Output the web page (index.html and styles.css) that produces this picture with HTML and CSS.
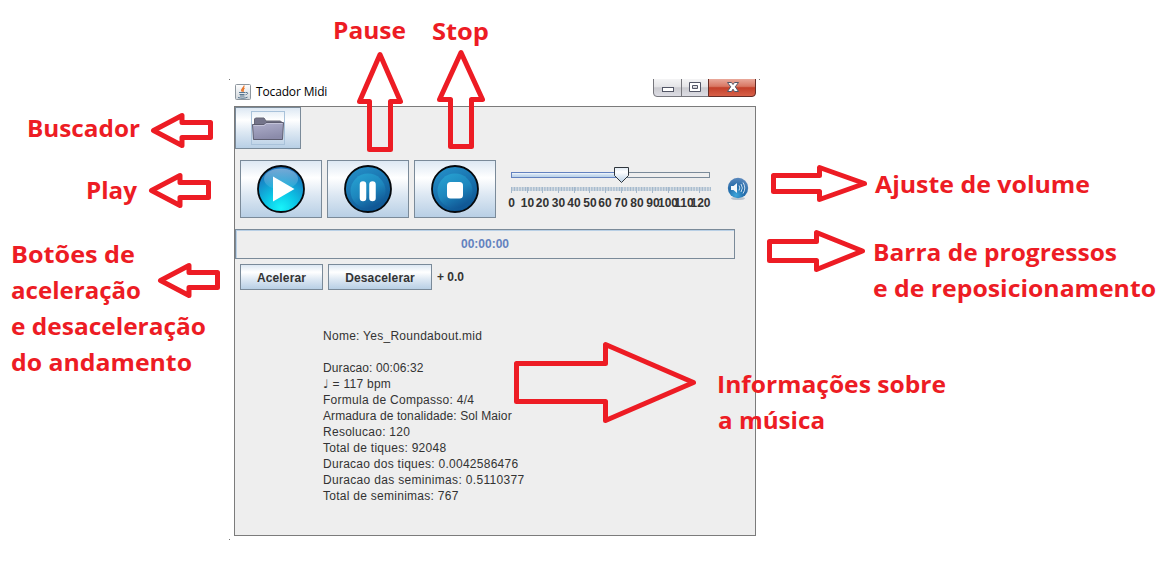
FILE: index.html
```
<!DOCTYPE html>
<html lang="pt-BR">
<head>
<meta charset="utf-8">
<title>Tocador Midi</title>
<link rel="stylesheet" href="styles.css">
</head>
<body>
<main class="page">
  <section class="window">
    <header class="titlebar">
      <svg class="java-icon" width="16" height="16" viewBox="0 0 16 16">
        <defs><linearGradient id="tile" x2="0" y2="1"><stop stop-color="#fff"/><stop offset="1" stop-color="#cfd5da"/></linearGradient></defs>
        <rect x=".5" y=".5" width="15" height="15" rx="1" fill="url(#tile)" stroke="#8d969e"/>
        <path d="M9 1.500C9.500 4 5.500 4.500 7 7.500M9.500 4C7.500 5.500 8.500 6 8 8" fill="none" stroke="#e8772e" stroke-width="1.300"/>
        <path d="M4 8.500h6.500M11 8.500c2.500-.5 2 2-.5 2.300M4.500 10.500h5M5 12h4.500M3 13.500c3 1 7 1 9.500-.3" fill="none" stroke="#56758f" stroke-width="1"/>
      </svg>
      <h1 class="title">Tocador Midi</h1>
      <svg class="controls" width="104" height="19" viewBox="0 0 104 19">
        <defs>
          <linearGradient id="glass" x2="0" y2="1"><stop stop-color="#f4f4f5"/><stop offset=".45" stop-color="#e4e4e7"/><stop offset=".5" stop-color="#cbcbd0"/><stop offset="1" stop-color="#dedee5"/></linearGradient>
          <linearGradient id="close" x2="0" y2="1"><stop stop-color="#e9a99b"/><stop offset=".42" stop-color="#d87763"/><stop offset=".5" stop-color="#c3402a"/><stop offset="1" stop-color="#d9624a"/></linearGradient>
        </defs>
        <path d="M.5 0V14Q.5 17.500 4 17.500H55.500V0Z" fill="url(#glass)"/>
        <path d="M55.500 0H102.500V14Q102.500 17.500 99 17.500H55.500Z" fill="url(#close)"/>
        <path d="M.5 0V14Q.5 17.500 4 17.500H55.500M28.500 0V17" fill="none" stroke="#77777d"/>
        <path d="M55.500 0V17.500H99Q102.500 17.500 102.500 14V0" fill="none" stroke="#642c26"/>
        <rect x="9.500" y="8.500" width="11" height="4" fill="#fff" stroke="#535666"/>
        <path d="M36.500 3.500h11v9h-11zM39.500 6.500h5v3h-5z" fill="#fff" fill-rule="evenodd" stroke="#535666"/>
        <path d="M74.500 3.500h4l1.500 2 1.500-2h4l-3.200 4.300 3.200 4.700h-4L80 10.200l-1.500 2.300h-4l3.200-4.700z" fill="#fff" stroke="#535666"/>
      </svg>
    </header>

    <div class="content">
      <button class="btn browse" aria-label="Buscador">
        <svg width="34" height="34" viewBox="0 0 34 34">
          <defs><linearGradient id="folder" x2=".3" y2="1"><stop stop-color="#b0b0cc"/><stop offset="1" stop-color="#8b8baa"/></linearGradient></defs>
          <rect x=".5" y=".5" width="33" height="33" fill="none" stroke="#a9c2da"/>
          <path d="M3.500 27V8l1-1H13l2 3h14.500l1 1v4" fill="#74748a" stroke="#666675"/>
          <path d="M1.500 13.500H13l2-2h17.500L31.500 28.500H2.500z" fill="url(#folder)" stroke="#5d5d70"/>
          <path d="M2.500 14.500h11l2-2h16" fill="none" stroke="#c3c3d8"/>
        </svg>
      </button>

      <div class="transport">
        <button class="btn media" aria-label="Play">
          <svg width="48" height="48" viewBox="0 0 48 48">
            <defs>
              <radialGradient id="cyan" cx=".5" cy=".92" r=".85"><stop stop-color="#18f4fa"/><stop offset=".4" stop-color="#0bc6e6"/><stop offset=".75" stop-color="#1593cd"/><stop offset="1" stop-color="#1972bb"/></radialGradient>
              <linearGradient id="shine" x2="0" y2="1"><stop stop-color="#fff" stop-opacity=".4"/><stop offset="1" stop-color="#fff" stop-opacity=".05"/></linearGradient>
            </defs>
            <circle cx="24" cy="24" r="23" fill="url(#cyan)" stroke="#05090d" stroke-width="1.800"/>
            <ellipse cx="24" cy="14" rx="17" ry="10.500" fill="url(#shine)"/>
            <path d="M16 11.500L37.500 24 16 36.500Z" fill="#fff"/>
          </svg>
        </button>
        <button class="btn media" aria-label="Pause">
          <svg width="48" height="48" viewBox="0 0 48 48">
            <defs>
              <linearGradient id="ring" x1=".25" x2=".75" y2="1"><stop stop-color="#248fc8"/><stop offset="1" stop-color="#0d5391"/></linearGradient>
              <linearGradient id="disc" x1=".25" x2=".75" y2="1"><stop stop-color="#269fd0"/><stop offset=".5" stop-color="#1d86bd"/><stop offset="1" stop-color="#0f508f"/></linearGradient>
            </defs>
            <circle cx="24" cy="24" r="23" fill="url(#ring)" stroke="#05090d" stroke-width="1.800"/>
            <circle cx="24" cy="26" r="17.500" fill="url(#disc)"/>
            <path d="M19 19.500V33M28.500 19.500V33" stroke="#fff" stroke-width="6.500" stroke-linecap="round" fill="none"/>
          </svg>
        </button>
        <button class="btn media" aria-label="Stop">
          <svg width="48" height="48" viewBox="0 0 48 48">
            <circle cx="24" cy="24" r="23" fill="url(#ring)" stroke="#05090d" stroke-width="1.800"/>
            <circle cx="24" cy="26" r="17.500" fill="url(#disc)"/>
            <rect x="16" y="17" width="16" height="16.500" rx="3.500" fill="#fff"/>
          </svg>
        </button>
        <svg class="slider" width="214" height="48" viewBox="501 163 214 48">
          <defs>
            <linearGradient id="fill" x2="0" y2="1"><stop stop-color="#fff"/><stop offset=".5" stop-color="#c8dcf0"/><stop offset="1" stop-color="#b8cfe5"/></linearGradient>
            <linearGradient id="thumb" x2="0" y2="1"><stop stop-color="#dde8f3"/><stop offset=".3" stop-color="#fff"/><stop offset="1" stop-color="#b8cfe5"/></linearGradient>
            <pattern id="minor" x="511" y="187" width="1.567" height="4" patternUnits="userSpaceOnUse"><rect width="1" height="4" fill="#a3b8cc"/></pattern>
          </defs>
          <rect x="511.500" y="172.500" width="198" height="5" fill="#eee" stroke="#7a8a99"/>
          <rect x="511.500" y="172.500" width="110" height="5" fill="url(#fill)" stroke="#6382bf"/>
          <rect x="511" y="187" width="200" height="4" fill="url(#minor)"/>
          <path d="M511.500 187v6M527.500 187v6M542.500 187v6M558.500 187v6M574.500 187v6M589.500 187v6M605.500 187v6M621.500 187v6M636.500 187v6M652.500 187v6M668.500 187v6M683.500 187v6M699.500 187v6" stroke="#a3b8cc"/>
          <path d="M614.500 167.500h14v8l-7 7-7-7z" fill="url(#thumb)" stroke="#30363c"/>
          <g class="tick-labels">
            <text x="511.500" y="207">0</text><text x="527.500" y="207">10</text><text x="542.500" y="207">20</text><text x="558.500" y="207">30</text><text x="574" y="207">40</text><text x="590" y="207">50</text><text x="605" y="207">60</text><text x="621" y="207">70</text><text x="637" y="207">80</text><text x="653" y="207">90</text><text x="668" y="207">100</text><text x="684" y="207">110</text><text x="700.500" y="207">120</text>
          </g>
        </svg>
        <svg class="speaker" width="24" height="24" viewBox="0 0 24 24">
          <defs><radialGradient id="ball" cx=".4" cy=".85" r=".85"><stop stop-color="#3ca6dc"/><stop offset=".5" stop-color="#236ba9"/><stop offset="1" stop-color="#5b88bc"/></radialGradient></defs>
          <ellipse cx="12" cy="21.500" rx="7" ry="1.600" fill="#b9c4cf"/>
          <circle cx="12" cy="11" r="10.200" fill="url(#ball)"/>
          <path d="M5 9h2.500L11 6v10l-3.500-3H5z" fill="#f4f8fc"/>
          <path d="M13 8.500q1.800 2.500 0 5M15 7q2.700 4 0 8M17 5.500q3.600 5.500 0 11" fill="none" stroke="#dcebf7" stroke-width=".9"/>
        </svg>
      </div>

      <div class="progress">00:00:00</div>

      <div class="tempo">
        <button class="btn accel">Acelerar</button>
        <button class="btn decel">Desacelerar</button>
        <span>+ 0.0</span>
      </div>

      <div class="info">
        <p>Nome: Yes_Roundabout.mid</p>
        <p class="gap tight">Duracao: 00:06:32</p>
        <p><span class="note">♩</span> = 117 bpm</p>
        <p>Formula de Compasso: 4/4</p>
        <p class="tight">Armadura de tonalidade: Sol Maior</p>
        <p>Resolucao: 120</p>
        <p>Total de tiques: 92048</p>
        <p>Duracao dos tiques: 0.0042586476</p>
        <p class="wide">Duracao das seminimas: 0.5110377</p>
        <p>Total de seminimas: 767</p>
      </div>
    </div>
  </section>

  <svg class="annotations" width="1172" height="563" viewBox="0 0 1172 563">
    <g class="specks"><path d="M229 79h1v1h-1zM759 79h1v1h-1zM229 539h1v1h-1z"/></g>
    <g class="arrows">
      <path d="M380 54.500L400.500 101.500H390.500V149.500H369.500V101.500H359.500Z"/>
      <path d="M461 52.500L482.500 99.500H471.500V146.500H450.500V99.500H439.500Z"/>
      <path d="M153.500 130.500L182 115.500V122.500H210.500V137.500H182V145.500Z"/>
      <path d="M151.500 190.500L180 175.500V182.500H208.500V197.500H180V205.500Z"/>
      <path d="M160.500 280.500L189 265.500V272.500H217.500V287.500H189V295.500Z"/>
      <path d="M864.500 183.500L819.500 167.500V175.500H773.500V191.500H819.500V199.500Z"/>
      <path d="M862.500 251L816.500 232.500V241.500H769.500V260.500H816.500V269.500Z"/>
      <path d="M693.500 382.500L605.500 344.500V363.500H516.500V401.500H605.500V420.500Z"/>
    </g>
    <g class="captions">
      <text x="333" y="39" textLength="73" lengthAdjust="spacingAndGlyphs">Pause</text>
      <text x="432" y="40" textLength="57" lengthAdjust="spacingAndGlyphs">Stop</text>
      <text x="27" y="137" textLength="113" lengthAdjust="spacingAndGlyphs">Buscador</text>
      <text x="86" y="199" textLength="51" lengthAdjust="spacingAndGlyphs">Play</text>
      <text x="11" y="263" textLength="124" lengthAdjust="spacingAndGlyphs">Botões de</text>
      <text x="11" y="299" textLength="130" lengthAdjust="spacingAndGlyphs">aceleração</text>
      <text x="11" y="335" textLength="195" lengthAdjust="spacingAndGlyphs">e desaceleração</text>
      <text x="11" y="371" textLength="181" lengthAdjust="spacingAndGlyphs">do andamento</text>
      <text x="875" y="193" textLength="215" lengthAdjust="spacingAndGlyphs">Ajuste de volume</text>
      <text x="873" y="261" textLength="244" lengthAdjust="spacingAndGlyphs">Barra de progressos</text>
      <text x="873" y="297" textLength="283" lengthAdjust="spacingAndGlyphs">e de reposicionamento</text>
      <text x="717" y="393" textLength="229" lengthAdjust="spacingAndGlyphs">Informações sobre</text>
      <text x="718" y="429" textLength="107" lengthAdjust="spacingAndGlyphs">a música</text>
    </g>
  </svg>
</main>
</body>
</html>
```

FILE: styles.css
```
* { box-sizing: border-box; }
body { margin: 0; background: #fff; }
svg { display: block; flex: none; }
.page {
  position: relative;
  width: 1172px;
  height: 563px;
  padding: 79px 0 0 234px;
  overflow: hidden;
  font: 12px "Liberation Sans", Arial, sans-serif;
  color: #333;
}
.window { width: 522px; }
.titlebar { display: flex; height: 27px; padding-left: 1px; }
.java-icon { margin-top: 5px; }
.title {
  margin: 4px 0 0 5px;
  font: 12px/17px "Open Sans", "Noto Sans", sans-serif;
  letter-spacing: -.15px;
  color: #000;
}
.controls { margin: 0 -1px 0 auto; }
.content {
  height: 430px;
  background: #eee;
  border: 1px solid #7b7b7b;
}
.btn {
  display: flex;
  align-items: center;
  justify-content: center;
  padding: 0;
  border: 1px solid #7a8a99;
  background: linear-gradient(#dde8f3, #fff 30%, #dde8f3 60%, #b8cfe5);
  color: #333;
  font: bold 12px "Liberation Sans", Arial, sans-serif;
  letter-spacing: .15px;
}
.browse { width: 66px; height: 42px; }
.transport { display: flex; gap: 5px; margin: 11px 0 0 5px; }
.media { width: 82px; height: 58px; }
.slider { margin-top: 3px; }
.tick-labels { font-weight: bold; fill: #333; text-anchor: middle; }
.speaker { margin: 17px 0 0 6px; }
.progress {
  width: 500px;
  height: 30px;
  margin-top: 11px;
  border: 1px solid #7a8a99;
  box-shadow: inset 1px 1px #b8cfe5;
  color: #6382bf;
  font-weight: bold;
  line-height: 29px;
  text-align: center;
}
.tempo { display: flex; gap: 5px; margin: 5px 0 0 5px; font-weight: bold; line-height: 27px; }
.accel, .decel { height: 26px; padding-top: 1px; }
.accel { width: 83px; }
.decel { width: 104px; }
.info { margin: 37px 0 0 88px; line-height: 16px; letter-spacing: .27px; }
.info p { margin: 0; height: 16px; white-space: pre; }
.info .gap { margin-top: 16px; }
.info .tight { letter-spacing: .1px; }
.info .wide { letter-spacing: .32px; }
.note { font-family: "DejaVu Sans", sans-serif; }
.annotations { position: absolute; top: 0; left: 0; pointer-events: none; }
.specks { fill: #777; }
.arrows { fill: none; stroke: #ed1c24; stroke-width: 5; stroke-linejoin: round; }
.captions { fill: #ed1c24; font: bold 24px "Open Sans", sans-serif; }
```
